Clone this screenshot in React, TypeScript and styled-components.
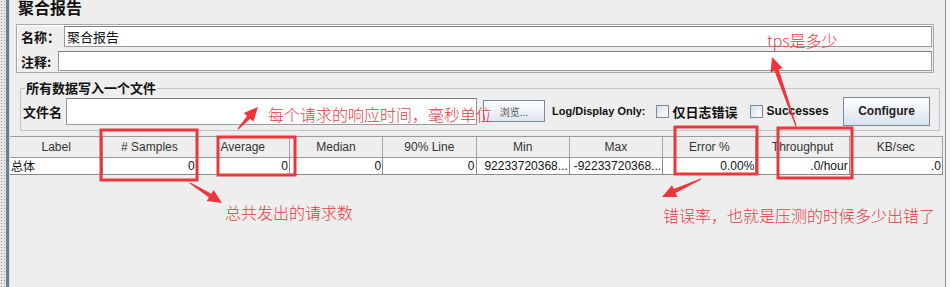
import styled, { createGlobalStyle } from 'styled-components'

const GlobalStyle = createGlobalStyle`
  html, body {
    margin: 0;
    padding: 0;
    background: #eeeeee;
  }
  body {
    font-family: "Liberation Sans", "Noto Sans CJK SC", sans-serif;
  }
`

const CJK = `"Noto Sans CJK SC", "Liberation Sans", sans-serif`
const LATIN = `"Liberation Sans", "Noto Sans CJK SC", sans-serif`
const RED = '#e8383d'

const Screen = styled.div`
  position: relative;
  width: 950px;
  height: 287px;
  overflow: hidden;
  display: flex;
  background: #eeeeee;
`

const DotStrip = styled.div`
  width: 6px;
  flex-shrink: 0;
  background-color: #e6e6e6;
  background-image: radial-gradient(#9a9a9a 0.8px, transparent 0.9px);
  background-size: 3px 3px;
`

const Splitter = styled.div`
  width: 3px;
  flex-shrink: 0;
  background: #6f7c89;
  border-right: 1px solid #d6dbe0;
`

const Panel = styled.div`
  flex: 1;
  display: flex;
  flex-direction: column;
  background: #eeeeee;
  border-right: 1px solid #8c8c8c;
  min-width: 0;
`

const RightEdge = styled.div`
  width: 4px;
  flex-shrink: 0;
  background: #f6f6f6;
`

const Title = styled.div`
  margin: 0 0 0 8px;
  height: 15px;
  font-family: ${CJK};
  font-size: 16px;
  font-weight: 700;
  line-height: 15px;
  color: #111;
`

const NameBox = styled.div`
  margin: 9px 11px 0 6px;
  border: 1px solid #a8a8a8;
  box-shadow: inset 1px 1px 0 #ffffff;
  padding: 1px 1px 1px 4px;
  display: flex;
  flex-direction: column;
  gap: 4px;
`

const FieldRow = styled.div`
  display: flex;
  align-items: center;
`

const FieldLabel = styled.span<{ $w: number }>`
  width: ${(p) => p.$w}px;
  flex-shrink: 0;
  font-family: ${CJK};
  font-size: 13px;
  font-weight: 700;
  color: #111;
  white-space: nowrap;
`

const TextInput = styled.div<{ $h: number }>`
  flex: 1;
  height: ${(p) => p.$h}px;
  box-sizing: border-box;
  background: #ffffff;
  border: 1px solid #9a9a9a;
  border-top-color: #7d7d7d;
  padding: 0 2px;
  font-family: ${CJK};
  font-size: 13px;
  line-height: ${(p) => p.$h - 2}px;
  color: #111;
`

const FileGroup = styled.fieldset`
  margin: 7px 5px 0 10px;
  padding: 0 9px 4px 2px;
  border: 1px solid #c4c4c4;
  min-inline-size: 0;
`

const Legend = styled.legend`
  padding: 0 1px;
  margin-left: 2px;
  font-family: ${CJK};
  font-size: 13px;
  font-weight: 700;
  line-height: 16px;
  color: #111;
`

const FileRow = styled.div`
  display: flex;
  align-items: center;
  height: 30px;
`

const BoldText = styled.span<{ $ml?: number; $cjk?: boolean; $size?: number }>`
  margin-left: ${(p) => p.$ml ?? 0}px;
  font-family: ${(p) => (p.$cjk ? CJK : LATIN)};
  font-size: ${(p) => p.$size ?? (p.$cjk ? 13 : 12)}px;
  font-weight: 700;
  color: #111;
  white-space: nowrap;
`

const FileInput = styled.div`
  margin-left: 4px;
  width: 411px;
  height: 27px;
  box-sizing: border-box;
  background: #ffffff;
  border: 1px solid #9a9a9a;
  border-top-color: #7d7d7d;
`

const BrowseButton = styled.button`
  margin-left: 6px;
  width: 62px;
  height: 22px;
  padding: 0;
  border: 1px solid #7a8a99;
  background: linear-gradient(#ffffff, #dde6ef);
  font-family: ${CJK};
  font-size: 10px;
  color: #555;
`

const CheckBox = styled.span<{ $ml: number }>`
  margin-left: ${(p) => p.$ml}px;
  width: 13px;
  height: 13px;
  box-sizing: border-box;
  border: 1px solid #7a8a99;
  background: linear-gradient(135deg, #d5dfea, #ffffff);
  flex-shrink: 0;
`

const ConfigureButton = styled.button`
  margin-left: auto;
  width: 87px;
  height: 29px;
  padding: 0;
  border: 1px solid #7a8a99;
  background: linear-gradient(#ffffff, #d6e2ee);
  font-family: ${LATIN};
  font-size: 12px;
  font-weight: 700;
  color: #222;
`

const Table = styled.div`
  margin: 5px 2px 0 0;
  border-top: 1px solid #9a9a9a;
  display: flex;
  flex-direction: column;
`

const Grid = styled.div`
  display: grid;
  grid-template-columns: repeat(10, 1fr);
`

const HeadCell = styled.div`
  height: 20px;
  border-right: 1px solid #a6a6a6;
  border-bottom: 1px solid #9a9a9a;
  font-family: ${LATIN};
  font-size: 12px;
  line-height: 20px;
  text-align: center;
  color: #333;
  white-space: nowrap;
  overflow: hidden;
`

const BodyCell = styled.div<{ $left?: boolean }>`
  height: 16px;
  background: #ffffff;
  border-right: 1px solid #8a8a8a;
  border-bottom: 1px solid #8a8a8a;
  padding: 0 1px;
  font-family: ${(p) => (p.$left ? CJK : LATIN)};
  font-size: 12px;
  line-height: 16px;
  text-align: ${(p) => (p.$left ? 'left' : 'right')};
  color: #111;
  white-space: nowrap;
`

const Overlay = styled.svg`
  position: absolute;
  inset: 0;
  pointer-events: none;
`

const Note = styled.span<{ $x: number; $y: number }>`
  position: absolute;
  left: ${(p) => p.$x}px;
  top: ${(p) => p.$y}px;
  font-family: ${CJK};
  font-size: 16px;
  font-weight: 300;
  line-height: 20px;
  color: ${RED};
  white-space: nowrap;
`

const headers = ['Label', '# Samples', 'Average', 'Median', '90% Line', 'Min', 'Max', 'Error %', 'Throughput', 'KB/sec']
const row = ['总体', '0', '0', '0', '0', '92233720368...', '-92233720368...', '0.00%', '.0/hour', '.0']

const boxes = [
  { x: 101, y: 130, w: 96, h: 50 },
  { x: 218, y: 137, w: 77, h: 38 },
  { x: 675, y: 127, w: 82, h: 47 },
  { x: 778, y: 128, w: 74, h: 50 }
]

const arrows: [number, number, number, number][] = [
  [238, 129, 258, 107],
  [190, 183, 222, 203],
  [701, 179, 662, 197],
  [796, 126, 772, 57]
]

function arrowPoints(x1: number, y1: number, x2: number, y2: number): string {
  const dx = x2 - x1
  const dy = y2 - y1
  const len = Math.hypot(dx, dy)
  const ux = dx / len
  const uy = dy / len
  const px = -uy
  const py = ux
  const headLen = 14
  const nx = x2 - ux * headLen
  const ny = y2 - uy * headLen
  const pt = (x: number, y: number, s: number) => `${(x + px * s).toFixed(1)},${(y + py * s).toFixed(1)}`
  return [
    pt(x1, y1, 0.6),
    pt(nx, ny, 2.2),
    pt(nx, ny, 6.5),
    pt(x2, y2, 0),
    pt(nx, ny, -6.5),
    pt(nx, ny, -2.2),
    pt(x1, y1, -0.6)
  ].join(' ')
}

export default function App(): JSX.Element {
  return (
    <>
      <GlobalStyle />
      <Screen>
        <DotStrip />
        <Splitter />
        <Panel>
          <Title>聚合报告</Title>
          <NameBox>
            <FieldRow>
              <FieldLabel $w={43}>名称：</FieldLabel>
              <TextInput $h={21}>聚合报告</TextInput>
            </FieldRow>
            <FieldRow>
              <FieldLabel $w={37}>注释:</FieldLabel>
              <TextInput $h={20} />
            </FieldRow>
          </NameBox>
          <FileGroup>
            <Legend>所有数据写入一个文件</Legend>
            <FileRow>
              <BoldText $cjk>文件名</BoldText>
              <FileInput />
              <BrowseButton>浏览...</BrowseButton>
              <BoldText $ml={7} $size={11}>
                Log/Display Only:
              </BoldText>
              <CheckBox $ml={10} />
              <BoldText $ml={4} $cjk>
                仅日志错误
              </BoldText>
              <CheckBox $ml={12} />
              <BoldText $ml={4}>Successes</BoldText>
              <ConfigureButton>Configure</ConfigureButton>
            </FileRow>
          </FileGroup>
          <Table>
            <Grid>
              {headers.map((h) => (
                <HeadCell key={h}>{h}</HeadCell>
              ))}
              {row.map((v, i) => (
                <BodyCell key={i} $left={i === 0}>
                  {v}
                </BodyCell>
              ))}
            </Grid>
          </Table>
        </Panel>
        <RightEdge />

        <Overlay width={950} height={287} viewBox="0 0 950 287">
          {boxes.map((b, i) => (
            <rect key={i} x={b.x} y={b.y} width={b.w} height={b.h} fill="none" stroke={RED} strokeWidth={3} />
          ))}
          {arrows.map((a, i) => (
            <polygon key={i} points={arrowPoints(a[0], a[1], a[2], a[3])} fill="#f0353a" />
          ))}
        </Overlay>
        <Note $x={268} $y={104}>每个请求的响应时间，毫秒单位</Note>
        <Note $x={767} $y={30}>tps是多少</Note>
        <Note $x={225} $y={202}>总共发出的请求数</Note>
        <Note $x={663} $y={205}>错误率，也就是压测的时候多少出错了</Note>
      </Screen>
    </>
  )
}
